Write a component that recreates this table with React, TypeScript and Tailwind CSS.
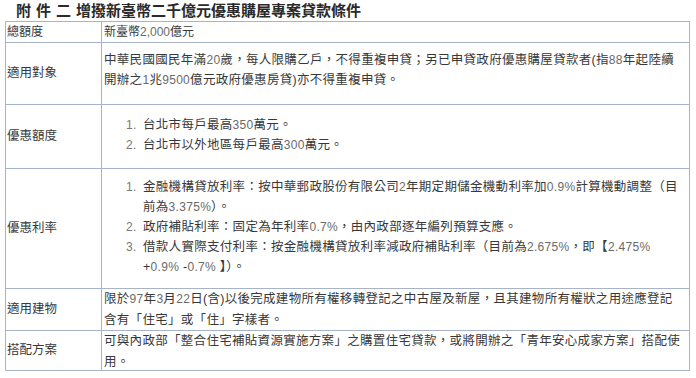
import React from "react";

const T = ({ s }: { s: string }) => (
  <>
    {s.split(/([0-9][0-9.,%]*)/).map((p, i) =>
      /^[0-9]/.test(p) ? (
        <span key={i} className="text-[#6a6a6a] text-[12px]">
          {p}
        </span>
      ) : (
        <React.Fragment key={i}>{p}</React.Fragment>
      )
    )}
  </>
);

const Label = ({ children, h }: { children: React.ReactNode; h: string }) => (
  <div className={`w-[96px] shrink-0 border-r border-[#a7b4c8] flex items-center pl-[1px] ${h}`}>
    {children}
  </div>
);

const Item = ({ n, children }: { n: string; children: React.ReactNode }) => (
  <div className="flex">
    <span className="w-[17px] shrink-0 text-[#777] text-[12px]">{n}</span>
    <div>{children}</div>
  </div>
);

export default function App() {
  return (
    <div className="bg-white w-[696px] h-[378px] text-[#383838] font-['Liberation_Sans','Noto_Sans_CJK_TC',sans-serif] text-[12.5px]">
      <div className="h-[21px] leading-[21px] pl-[16px] text-[15px] font-bold text-[#2a2a2a] whitespace-nowrap">
        <span className="tracking-[5px]">附件二</span>
        <span>增撥新臺幣二千億元優惠購屋專案貸款條件</span>
      </div>
      <div className="ml-[5px] w-[685px] border-l border-t border-[#a7b4c8]">
        <div className="flex border-b border-[#a7b4c8]">
          <Label h="h-[20px] text-[12px]">總額度</Label>
          <div className="w-[588px] border-r border-[#a7b4c8] h-[20px] flex items-center pl-[2px] text-[12px]">
            <span>
              <T s="新臺幣2,000億元" />
            </span>
          </div>
        </div>
        <div className="flex border-b border-[#a7b4c8]">
          <Label h="h-[61px]">適用對象</Label>
          <div className="w-[588px] border-r border-[#a7b4c8] h-[61px] pl-[2px] pt-[7px] leading-[20px] whitespace-nowrap tracking-[0.3px]">
            <T s="中華民國國民年滿20歲，每人限購乙戶，不得重複申貸；另已申貸政府優惠購屋貸款者(指88年起陸續" />
            <br />
            <T s="開辦之1兆9500億元政府優惠房貸)亦不得重複申貸。" />
          </div>
        </div>
        <div className="flex border-b border-[#a7b4c8]">
          <Label h="h-[63px]">優惠額度</Label>
          <div className="w-[588px] border-r border-[#a7b4c8] h-[63px] pl-[24px] pt-[10px] leading-[20px] whitespace-nowrap tracking-[0.3px]">
            <Item n="1.">
              <T s="台北市每戶最高350萬元。" />
            </Item>
            <Item n="2.">
              <T s="台北市以外地區每戶最高300萬元。" />
            </Item>
          </div>
        </div>
        <div className="flex border-b border-[#a7b4c8]">
          <Label h="h-[119px]">優惠利率</Label>
          <div className="w-[588px] border-r border-[#a7b4c8] h-[119px] pl-[24px] pt-[8px] leading-[20px] whitespace-nowrap tracking-[0.3px]">
            <Item n="1.">
              <T s="金融機構貸放利率：按中華郵政股份有限公司2年期定期儲金機動利率加0.9%計算機動調整（目" />
              <br />
              <T s="前為3.375%）。" />
            </Item>
            <Item n="2.">
              <T s="政府補貼利率：固定為年利率0.7%，由內政部逐年編列預算支應。" />
            </Item>
            <Item n="3.">
              <T s="借款人實際支付利率：按金融機構貸放利率減政府補貼利率（目前為2.675%，即【2.475%" />
              <br />
              <T s="+0.9% -0.7% 】）。" />
            </Item>
          </div>
        </div>
        <div className="flex border-b border-[#a7b4c8]">
          <Label h="h-[41px]">適用建物</Label>
          <div className="w-[588px] border-r border-[#a7b4c8] h-[41px] pl-[2px] leading-[21px] whitespace-nowrap tracking-[0.3px]">
            <T s="限於97年3月22日(含)以後完成建物所有權移轉登記之中古屋及新屋，且其建物所有權狀之用途應登記" />
            <br />
            含有「住宅」或「住」字樣者。
          </div>
        </div>
        <div className="flex border-b border-[#a7b4c8]">
          <Label h="h-[39px]">搭配方案</Label>
          <div className="w-[588px] border-r border-[#a7b4c8] h-[39px] pl-[2px] leading-[21px] whitespace-nowrap tracking-[0.3px]">
            可與內政部「整合住宅補貼資源實施方案」之購置住宅貸款，或將開辦之「青年安心成家方案」搭配使
            <br />
            用。
          </div>
        </div>
      </div>
    </div>
  );
}
